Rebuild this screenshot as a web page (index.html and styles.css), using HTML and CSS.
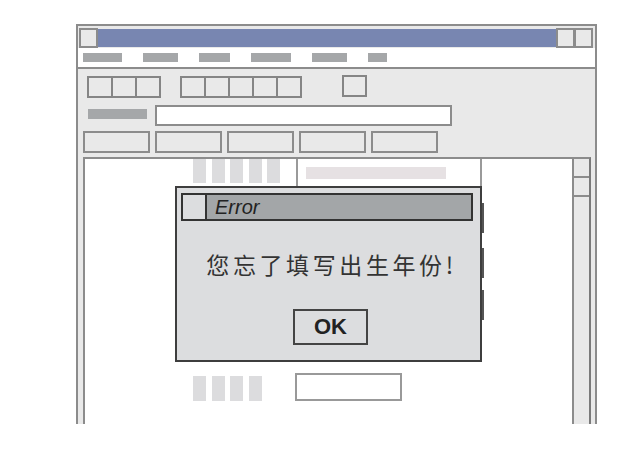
FILE: index.html
```html
<!DOCTYPE html>
<html lang="zh-CN">
<head>
<meta charset="utf-8">
<title>Error</title>
<link rel="stylesheet" href="styles.css">
</head>
<body>
<div class="win">
  <div class="titlebar">
    <div class="tb-icon"></div>
    <div class="tb-fill"></div>
    <div class="tb-btn"></div>
    <div class="tb-btn tb-btn-last"></div>
  </div>
  <div class="menubar">
    <span class="mi w39"></span>
    <span class="mi w35"></span>
    <span class="mi w31"></span>
    <span class="mi w40"></span>
    <span class="mi w35"></span>
    <span class="mi w19"></span>
  </div>
  <div class="tools">
    <div class="row1">
      <div class="group"><span class="tbox"></span><span class="tbox"></span><span class="tbox"></span></div>
      <div class="group g2"><span class="tbox"></span><span class="tbox"></span><span class="tbox"></span><span class="tbox"></span><span class="tbox"></span></div>
      <div class="group g3"><span class="tbox single"></span></div>
    </div>
    <div class="row2">
      <span class="label"></span>
      <span class="input"></span>
    </div>
    <div class="row3">
      <span class="btn"></span><span class="btn"></span><span class="btn"></span><span class="btn"></span><span class="btn"></span>
    </div>
  </div>
  <div class="main">
    <div class="content">
      <div class="rowA">
        <div class="bars"><span class="bar"></span><span class="bar"></span><span class="bar"></span><span class="bar"></span><span class="bar"></span></div>
        <div class="bigbox"><span class="boxbar"></span></div>
      </div>
      <div class="rowB">
        <div class="bars"><span class="bar b2"></span><span class="bar b2"></span><span class="bar b2"></span><span class="bar b2"></span></div>
        <span class="field"></span>
      </div>
      <div class="dialog">
        <span class="edge e1"></span><span class="edge e2"></span><span class="edge e3"></span>
        <div class="dlg-title"><span class="dlg-icon"></span><span class="dlg-caption">Error</span></div>
        <div class="dlg-msg">您忘了填写出生年份!</div>
        <div class="dlg-actions"><span class="ok">OK</span></div>
      </div>
    </div>
    <div class="scroll">
      <span class="sbtn"></span>
      <span class="sbtn"></span>
    </div>
  </div>
</div>
</body>
</html>
```
FILE: styles.css
```css
html, body {
  margin: 0;
  padding: 0;
  background: #ffffff;
}
body {
  font-family: "Liberation Sans", Arial, sans-serif;
}
.win {
  margin: 24px 0 0 76px;
  width: 521px;
  height: 400px;
  box-sizing: border-box;
  border: 2px solid #8c8c8c;
  border-bottom: none;
  background: #e9e9e9;
  display: flex;
  flex-direction: column;
  overflow: hidden;
}
.titlebar {
  display: flex;
  align-items: stretch;
  height: 20px;
  padding: 2px 2px 0 1px;
}
.tb-icon {
  width: 19px;
  box-sizing: border-box;
  border: 2px solid #8c8c8c;
  background: #e9e9e9;
}
.tb-fill {
  flex: 1;
  margin: 1px 0 1px 0;
  background: #7886b1;
}
.tb-btn {
  width: 19px;
  box-sizing: border-box;
  border: 2px solid #8c8c8c;
  background: #e9e9e9;
}
.tb-btn-last {
  margin-left: -1px;
}
.menubar {
  display: flex;
  align-items: center;
  gap: 21px;
  height: 19px;
  padding-left: 5px;
  background: #ffffff;
  border-bottom: 2px solid #8c8c8c;
}
.mi {
  display: block;
  height: 9px;
  background: #a5a7a9;
}
.w39 { width: 39px; }
.w35 { width: 35px; }
.w31 { width: 31px; }
.w40 { width: 40px; }
.w19 { width: 19px; }
.tools {
  display: flex;
  flex-direction: column;
  padding-bottom: 4px;
}
.row1 {
  display: flex;
  align-items: flex-start;
  padding: 7px 0 0 9px;
  height: 22px;
}
.group {
  display: flex;
}
.g2 { margin-left: 19px; }
.g3 { margin-left: 40px; margin-top: -1px; }
.tbox {
  display: block;
  width: 26px;
  height: 22px;
  box-sizing: border-box;
  border: 2px solid #858585;
}
.tbox + .tbox { margin-left: -2px; }
.single { width: 25px; }
.row2 {
  display: flex;
  align-items: center;
  margin-top: 7px;
  padding-left: 10px;
}
.label {
  display: block;
  width: 59px;
  height: 10px;
  margin-top: -3px;
  background: #a5a7a9;
}
.input {
  display: block;
  margin-left: 8px;
  width: 297px;
  height: 21px;
  box-sizing: border-box;
  border: 2px solid #8c8c8c;
  background: #ffffff;
}
.row3 {
  display: flex;
  gap: 5px;
  margin-top: 5px;
  padding-left: 5px;
}
.btn {
  display: block;
  width: 67px;
  height: 22px;
  box-sizing: border-box;
  border: 2px solid #8c8c8c;
}
.main {
  flex: 1;
  display: flex;
  min-height: 0;
}
.content {
  position: relative;
  flex: 1;
  margin-left: 5px;
  border-top: 2px solid #8c8c8c;
  border-left: 2px solid #8c8c8c;
  background: #ffffff;
}
.rowA {
  display: flex;
  align-items: flex-start;
}
.bars {
  display: flex;
  gap: 5.5px;
  margin-left: 108px;
}
.bar {
  display: block;
  width: 13px;
  height: 24px;
  background: #dcdcde;
}
.b2 { height: 25px; }
.bigbox {
  margin-left: 16px;
  width: 186px;
  height: 190px;
  box-sizing: border-box;
  border: 2px solid #9a9a9a;
  border-top: none;
  padding: 8px 0 0 8px;
}
.boxbar {
  display: block;
  width: 140px;
  height: 12px;
  background: #e6e1e3;
}
.rowB {
  display: flex;
  align-items: flex-end;
  margin-top: 24px;
}
.field {
  display: block;
  margin-left: 33.5px;
  width: 107px;
  height: 28px;
  box-sizing: border-box;
  border: 2px solid #999999;
  background: #ffffff;
}
.dialog {
  position: absolute;
  left: 90px;
  top: 27px;
  width: 307px;
  height: 176px;
  box-sizing: border-box;
  border: 2px solid #3e3e3e;
  background: #dcdddf;
  display: flex;
  flex-direction: column;
}
.edge {
  position: absolute;
  right: -4px;
  width: 2px;
  height: 30px;
  background: #555555;
}
.e1 { top: 15px; }
.e2 { top: 60px; }
.e3 { top: 102px; }
.dlg-title {
  display: flex;
  align-items: center;
  margin: 5px 7px 0 4px;
  height: 28px;
  box-sizing: border-box;
  border: 2px solid #333333;
  background: #a3a6a8;
}
.dlg-icon {
  display: block;
  width: 24px;
  height: 100%;
  box-sizing: border-box;
  border-right: 2px solid #333333;
  background: #dcdddf;
}
.dlg-caption {
  margin-left: 8px;
  font-style: italic;
  font-size: 20px;
  color: #222222;
}
.dlg-msg {
  margin-top: 28px;
  height: 30px;
  line-height: 30px;
  text-align: center;
  padding-left: 6px;
  font-family: "Noto Sans CJK SC", "Noto Sans", sans-serif;
  font-size: 23px;
  letter-spacing: 3.6px;
  color: #333333;
}
.dlg-actions {
  display: flex;
  justify-content: center;
  margin-top: 30px;
  padding-left: 4px;
}
.ok {
  display: flex;
  align-items: center;
  justify-content: center;
  width: 75px;
  height: 36px;
  box-sizing: border-box;
  border: 2px solid #444444;
  font-weight: bold;
  font-size: 22px;
  color: #222222;
}
.scroll {
  width: 19px;
  margin-right: 4px;
  box-sizing: border-box;
  border-left: 2px solid #8c8c8c;
  border-right: 2px solid #7a7a7a;
  border-top: 2px solid #8c8c8c;
  background: #e9e9e9;
  display: flex;
  flex-direction: column;
}
.sbtn {
  display: block;
  height: 19px;
  box-sizing: border-box;
  border-bottom: 2px solid #8c8c8c;
}
```
